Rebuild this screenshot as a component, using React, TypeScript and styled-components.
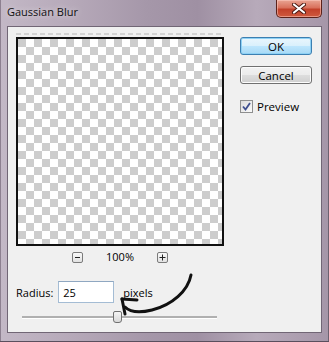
import React from "react";
import styled, { createGlobalStyle } from "styled-components";

const Global = createGlobalStyle`
  html, body { margin: 0; padding: 0; background: #fff; }
  body { font-family: "Open Sans", "Noto Sans", sans-serif; font-size: 11px; color: #000; }
`;

const Window = styled.div`
  position: relative;
  width: 329px;
  height: 342px;
  box-sizing: border-box;
  display: flex;
  flex-direction: column;
  background: linear-gradient(90deg, #c3b8c6 0%, #b6a9b9 22%, #a597a9 45%, #9f90a3 60%, #b7aaba 78%, #a596a8 100%);
  box-shadow: inset 0 -1px 0 #5a4f5e, inset -1px 0 0 #6d6270, inset 1px 0 0 #8d8090;
`;

const TitleBar = styled.div`
  height: 26px;
  display: flex;
  justify-content: space-between;
  align-items: flex-start;
  padding-left: 7px;
  padding-right: 7px;
  flex-shrink: 0;
`;

const Title = styled.div`
  margin-top: 4px;
  line-height: 16px;
  font-size: 11px;
  color: #111;
  text-shadow: 0 0 6px rgba(255, 255, 255, 0.7);
`;

const CloseButton = styled.div`
  width: 46px;
  height: 18px;
  box-sizing: border-box;
  border: 1px solid #5b221a;
  border-top: none;
  border-radius: 0 0 5px 5px;
  background: linear-gradient(180deg, #e9a493 0%, #d9715c 45%, #c2412a 55%, #cf5a3e 100%);
  box-shadow: inset 0 0 0 1px rgba(255, 210, 200, 0.5);
  display: flex;
  align-items: center;
  justify-content: center;
`;

const Client = styled.div`
  margin: 0 7px;
  height: 307px;
  box-sizing: border-box;
  border: 1px solid #716675;
  background: #f0f0f0;
  display: flex;
  padding: 6px 0 0 8px;
`;

const LeftCol = styled.div`
  width: 208px;
  display: flex;
  flex-direction: column;
`;

const DashStrip = styled.div`
  height: 2px;
  margin-bottom: 2px;
  background: repeating-linear-gradient(90deg, #d3d3d3 0 5px, transparent 5px 8px);
`;

const Preview = styled.div`
  width: 208px;
  height: 209px;
  box-sizing: border-box;
  border: 2px solid #111;
  background: conic-gradient(#ffffff 25%, #cdcdcd 0 50%, #ffffff 0 75%, #cdcdcd 0) 0 0 / 16px 16px;
`;

const ZoomRow = styled.div`
  margin-top: 5px;
  height: 12px;
  display: flex;
  align-items: center;
  justify-content: center;
  gap: 23px;
`;

const ZoomButton = styled.div`
  width: 11px;
  height: 11px;
  box-sizing: border-box;
  border: 1px solid #7b7b7b;
  border-radius: 2px;
  background: linear-gradient(180deg, #f8f8f8 0%, #e2e2e2 100%);
  display: flex;
  align-items: center;
  justify-content: center;
`;

const ZoomText = styled.span`
  font-size: 11px;
  line-height: 12px;
`;

const RadiusRow = styled.div`
  margin-top: 18px;
  height: 22px;
  display: flex;
  align-items: center;
`;

const Label = styled.span`
  font-size: 11px;
`;

const Input = styled.div`
  margin-left: 5px;
  width: 56px;
  height: 22px;
  box-sizing: border-box;
  border: 1px solid #a4bcd4;
  border-top-color: #8fa7c1;
  background: #fff;
  padding-left: 4px;
  display: flex;
  align-items: center;
  font-size: 11px;
`;

const Unit = styled.span`
  margin-left: 9px;
  font-size: 11px;
`;

const Slider = styled.div`
  position: relative;
  margin: 8px 7px 0 6px;
  height: 12px;
`;

const Track = styled.div`
  position: absolute;
  left: 0;
  right: 0;
  top: 5px;
  height: 2px;
  background: #b0b0b0;
  border-bottom: 1px solid #ffffff;
`;

const Thumb = styled.div`
  position: absolute;
  top: 0;
  width: 9px;
  height: 12px;
  box-sizing: border-box;
  border: 1px solid #707070;
  border-radius: 2px 2px 3px 3px;
  background: linear-gradient(180deg, #f4f4f4 0%, #d8d8d8 100%);
`;

const RightCol = styled.div`
  margin-left: 16px;
  margin-top: 4px;
  display: flex;
  flex-direction: column;
`;

const Button = styled.div<{ $default?: boolean }>`
  width: 72px;
  height: 18px;
  box-sizing: border-box;
  border-radius: 3px;
  display: flex;
  align-items: center;
  justify-content: center;
  font-size: 11.5px;
  border: 1px solid ${(p) => (p.$default ? "#3c7fb1" : "#707070")};
  background: ${(p) =>
    p.$default
      ? "linear-gradient(180deg, #eaf6fd 0%, #d9f0fc 50%, #bee6fd 51%, #a7d9f5 100%)"
      : "linear-gradient(180deg, #f2f2f2 0%, #ebebeb 50%, #dddddd 51%, #cfcfcf 100%)"};
  box-shadow: inset 0 0 0 1px ${(p) => (p.$default ? "#8ed1f5" : "#fcfcfc")};
  & + & {
    margin-top: 11px;
  }
`;

const CheckRow = styled.div`
  margin-top: 16px;
  display: flex;
  align-items: center;
  height: 13px;
`;

const CheckBox = styled.div`
  width: 13px;
  height: 13px;
  box-sizing: border-box;
  border: 1px solid #8e8f8f;
  background: linear-gradient(135deg, #dcdcdc 0%, #fbfbfb 100%);
  display: flex;
  align-items: center;
  justify-content: center;
`;

const CheckLabel = styled.span`
  margin-left: 4px;
  font-size: 11.5px;
`;

const Overlay = styled.svg`
  position: absolute;
  left: 0;
  top: 0;
  pointer-events: none;
`;

export default function App() {
  return (
    <>
      <Global />
      <Window>
        <TitleBar>
          <Title>Gaussian Blur</Title>
          <CloseButton>
            <svg width="14" height="11" viewBox="0 0 14 11">
              <path d="M2 1.5 L12 9.5 M12 1.5 L2 9.5" stroke="#4a1810" strokeWidth="4" strokeLinecap="round" />
              <path d="M2 1.5 L12 9.5 M12 1.5 L2 9.5" stroke="#ffffff" strokeWidth="2.2" strokeLinecap="round" />
            </svg>
          </CloseButton>
        </TitleBar>
        <Client>
          <LeftCol>
            <DashStrip />
            <Preview />
            <ZoomRow>
              <ZoomButton>
                <svg width="7" height="7" viewBox="0 0 7 7">
                  <path d="M1 3.5 H6" stroke="#222" strokeWidth="1" />
                </svg>
              </ZoomButton>
              <ZoomText>100%</ZoomText>
              <ZoomButton>
                <svg width="7" height="7" viewBox="0 0 7 7">
                  <path d="M0.5 3.5 H6.5 M3.5 0.5 V6.5" stroke="#222" strokeWidth="1" />
                </svg>
              </ZoomButton>
            </ZoomRow>
            <RadiusRow>
              <Label>Radius:</Label>
              <Input>25</Input>
              <Unit>pixels</Unit>
            </RadiusRow>
            <Slider>
              <Track />
              <Thumb style={{ left: 91 }} />
            </Slider>
          </LeftCol>
          <RightCol>
            <Button $default>OK</Button>
            <Button>Cancel</Button>
            <CheckRow>
              <CheckBox>
                <svg width="9" height="9" viewBox="0 0 9 9">
                  <path d="M1 4.5 L3.5 7.5 L8 1" stroke="#3f4f8f" strokeWidth="1.8" fill="none" />
                </svg>
              </CheckBox>
              <CheckLabel>Preview</CheckLabel>
            </CheckRow>
          </RightCol>
        </Client>
        <Overlay width="329" height="342" viewBox="0 0 329 342">
          <path
            d="M191 275 C188 291 172 305 152 310 C140 313 130 312 125 307"
            stroke="#111"
            strokeWidth="3"
            fill="none"
            strokeLinecap="round"
          />
          <path d="M122 299 L137 300" stroke="#111" strokeWidth="3" fill="none" strokeLinecap="round" />
          <path d="M122 299 L125 314" stroke="#111" strokeWidth="3" fill="none" strokeLinecap="round" />
        </Overlay>
      </Window>
    </>
  );
}
